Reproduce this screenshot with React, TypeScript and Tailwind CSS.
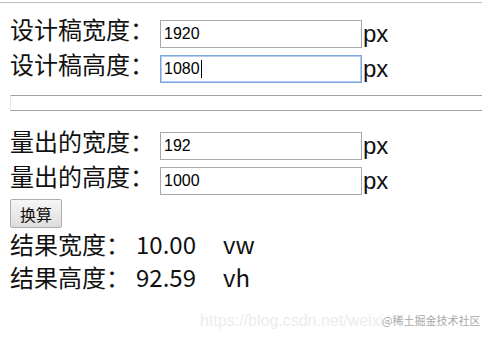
import React from "react";

const cjk = { fontFamily: '"Noto Sans CJK SC", "Noto Sans", sans-serif' };
const arial = { fontFamily: '"Liberation Sans", Arial, sans-serif' };

function Row({ label, value, focused }: { label: string; value: string; focused?: boolean }) {
  return (
    <div className="flex h-[35px] items-center">
      <span className="w-[150px] text-[24px] leading-none text-[#111] mb-[10px]" style={cjk}>
        {label}
      </span>
      <div
        className={
          "flex h-[28px] w-[202px] items-center px-[3px] text-[16px] text-black " +
          (focused ? "border border-[#7ba4e0] shadow-[0_0_0_1px_#b4cdf0_inset]" : "border border-[#a9a9a9]")
        }
        style={arial}
      >
        {value}
        {focused && <span className="ml-[1px] inline-block h-[18px] w-[1px] bg-black" />}
      </div>
      <span className="ml-[1px] text-[24px] leading-none text-[#111] mt-[1px]" style={arial}>
        px
      </span>
    </div>
  );
}

function Result({ label, value, unit }: { label: string; value: string; unit: string }) {
  return (
    <div className="flex h-[33px] items-center text-[24px] leading-none text-[#111]" style={cjk}>
      <span className="w-[126px]">{label}</span>
      <span className="w-[87px]">{value}</span>
      <span>{unit}</span>
    </div>
  );
}

export default function App() {
  return (
    <div className="relative h-[338px] w-[482px] overflow-hidden bg-white">
      <div className="h-[2px]" />
      <div className="h-[1px] w-full bg-[#bdbdbd]" />
      <div className="px-[10px] pt-[13px]">
        <Row label="设计稿宽度：" value="1920" />
        <Row label="设计稿高度：" value="1080" focused />
        <div className="mt-[9px] mr-[-20px] h-[16px] border border-[#a0a0a0] border-l-[#e6e6e6] border-r-0" />
        <div className="h-[17px]" />
        <Row label="量出的宽度：" value="192" />
        <Row label="量出的高度：" value="1000" />
        <button
          className="mt-[1px] flex h-[29px] w-[52px] items-center justify-center rounded-[2px] border border-[#adadad] bg-gradient-to-b from-[#f6f6f6] to-[#dddddd] text-[16px] text-[#111]"
          style={cjk}
        >
          换算
        </button>
        <div className="-mt-[1px]">
          <Result label="结果宽度：" value="10.00" unit="vw" />
          <Result label="结果高度：" value="92.59" unit="vh" />
        </div>
      </div>
      <div
        className="absolute left-[200px] top-[309px] whitespace-nowrap text-[16px] text-[#ececec]"
        style={arial}
      >
        https://blog.csdn.net/weixi
      </div>
      <div
        className="absolute left-[382px] top-[313px] whitespace-nowrap bg-white/60 text-[11px] leading-[14px] text-[#a8a8a8]"
        style={cjk}
      >
        @稀土掘金技术社区
      </div>
    </div>
  );
}
